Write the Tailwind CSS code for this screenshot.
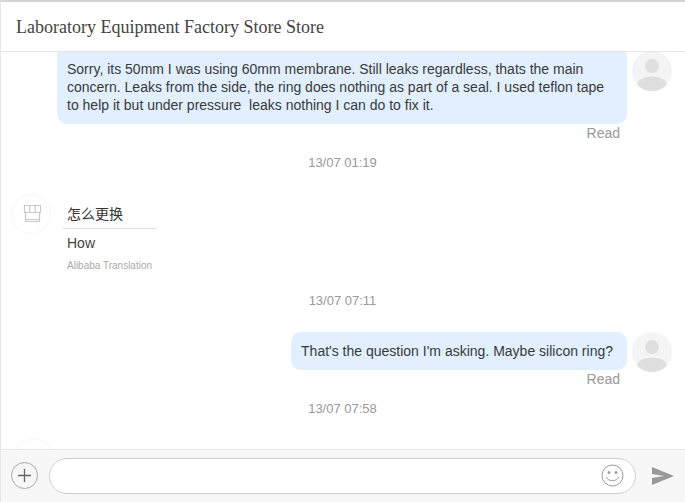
<!DOCTYPE html>
<html lang="en">
<head>
  <meta charset="UTF-8">
  <title>Chat</title>
  <script src="https://cdn.jsdelivr.net/npm/@tailwindcss/browser@4"></script>
</head>
<body class="bg-white font-['Liberation_Sans','Noto_Sans_CJK_SC',sans-serif] text-[#3a3a3a]">
  <div class="h-[502px] w-[685px] flex flex-col overflow-hidden border-t-2 border-l border-[#d4d4d4] border-l-[#e6e6e6]">
    <!-- Header -->
    <header class="h-[50px] shrink-0 flex items-center pl-[15px] pt-[1px] border-b border-[#e6e6e6] font-['Liberation_Serif',serif] text-[18px] text-[#444]">Laboratory Equipment Factory Store Store</header>

    <!-- Messages -->
    <main class="flex-1 overflow-hidden relative">
      <div class="flex justify-end items-start pr-[13px] gap-[5px]">
        <div class="w-[570px] h-[72px] bg-[#e1effe] rounded-b-[10px] rounded-t-[3px] pl-[10px] pt-[8px] text-[14px] leading-[18px] whitespace-pre">Sorry, its 50mm I was using 60mm membrane. Still leaks regardless, thats the main
concern. Leaks from the side, the ring does nothing as part of a seal. I used teflon tape
to help it but under pressure  leaks nothing I can do to fix it.</div>
        <div class="w-[40px] h-[40px] -mt-[1px] rounded-full bg-[#f4f4f4] overflow-hidden shrink-0">
          <svg viewBox="0 0 40 40" class="w-full h-full"><circle cx="20" cy="15" r="7" fill="#dedede"/><ellipse cx="20" cy="34" rx="15" ry="8.5" fill="#dedede"/></svg>
        </div>
      </div>
      <div class="text-right pr-[65px] text-[14px] leading-[18px] text-[#999]">Read</div>
      <div class="text-center pr-[1px] mt-[13px] text-[13px] leading-[16px] text-[#999] font-medium">13/07 01:19</div>

      <!-- Incoming -->
      <div class="flex items-start mt-[23px] pl-[10px]">
        <div class="w-[40px] h-[40px] rounded-full border border-[#f7f7f7] shrink-0 flex items-center justify-center">
          <svg viewBox="0 0 20 20" class="w-[20px] h-[20px]" fill="none" stroke="#c8c8c8" stroke-width="1.2"><path d="M3.500 1.500h16v7h-16zM8.800 1.500v7M14.200 1.500v7M4.500 8.500v9h14v-9M4.500 15.500h14"/></svg>
        </div>
        <div class="ml-[12px] w-[94px] pt-[10px]">
          <div class="h-[25px] border-b border-[#e2e2e2] pl-[4px] text-[14px] leading-[20px] text-[#333]">怎么更换</div>
          <div class="pl-[4px] pt-[5px] text-[14px] leading-[18px] text-[#444]">How</div>
          <div class="pl-[4px] pt-[8px] text-[10px] leading-[12px] text-[#aaa] whitespace-nowrap">Alibaba Translation</div>
        </div>
      </div>

      <div class="text-center pr-[1px] mt-[21px] text-[13px] leading-[16px] text-[#999] font-medium">13/07 07:11</div>

      <!-- Outgoing -->
      <div class="flex justify-end items-start pr-[13px] gap-[5px] mt-[23px]">
        <div class="h-[38px] bg-[#e1effe] rounded-[10px] pl-[10px] pr-[14px] text-[14px] leading-[38px]">That's the question I'm asking. Maybe silicon ring?</div>
        <div class="w-[40px] h-[40px] rounded-full bg-[#f4f4f4] overflow-hidden shrink-0">
          <svg viewBox="0 0 40 40" class="w-full h-full"><circle cx="20" cy="15" r="7" fill="#dedede"/><ellipse cx="20" cy="34" rx="15" ry="8.5" fill="#dedede"/></svg>
        </div>
      </div>
      <div class="-mt-[2px] text-right pr-[65px] text-[14px] leading-[18px] text-[#999]">Read</div>
      <div class="text-center pr-[1px] mt-[13px] text-[13px] leading-[16px] text-[#999] font-medium">13/07 07:58</div>

      <!-- Next message, cut off by the input bar -->
      <div class="mt-[21px] ml-[13px] w-[40px] h-[40px] rounded-full border border-[#f7f7f7]"></div>
    </main>

    <!-- Input bar -->
    <footer class="h-[53px] shrink-0 flex items-center pl-[10px] pb-[1px] bg-[#f7f7f7] border-t border-[#e8e8e8]">
      <div class="w-[27px] h-[27px] rounded-full border border-[#a8a8a8] flex items-center justify-center shrink-0">
        <svg viewBox="0 0 15 15" class="w-[15px] h-[15px]" stroke="#666" stroke-width="1.3"><path d="M7.500 1v13M1 7.500h13"/></svg>
      </div>
      <div class="ml-[11px] w-[587px] h-[36px] rounded-full border border-[#cfcfcf] bg-white flex items-center justify-end pr-[11px] shrink-0">
        <svg viewBox="0 0 23 23" class="w-[23px] h-[23px]" fill="none" stroke="#999" stroke-width="1"><circle cx="11.500" cy="11.500" r="10.500"/><circle cx="8" cy="8.500" r="1" fill="#999"/><circle cx="15" cy="8.500" r="1" fill="#999"/><path d="M5.500 13c1.500 5 10.500 5 12 0"/></svg>
      </div>
      <svg viewBox="0 0 22 18" class="ml-[16px] w-[22px] h-[18px] shrink-0" fill="#999"><path d="M0 0l22 9-22 9v-7l12-2-12-2z"/></svg>
    </footer>
  </div>
</body>
</html>
